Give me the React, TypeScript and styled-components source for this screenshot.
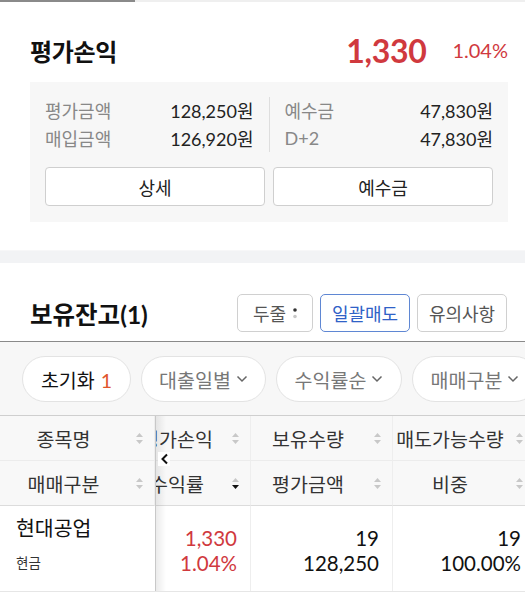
import * as React from 'react';
import styled, { createGlobalStyle } from 'styled-components';

const GlobalStyle = createGlobalStyle`
	html, body {
		margin: 0;
		padding: 0;
		background: #fff;
	}
	body {
		font-family: Lato, 'Noto Sans CJK KR', sans-serif;
		color: #111;
		width: 525px;
		overflow: hidden;
	}
	* {
		box-sizing: border-box;
	}
`;

const RED = '#d0393e';

let TabLine = styled.div`
	display: flex;
	height: 2px;
	background: #efefef;
`;
let TabActive = styled.div`
	width: 135px;
	background: #8a8a8a;
`;

let Summary = styled.section`
	padding: 30px 17px 28px 30px;
`;
let SummaryHead = styled.div`
	display: flex;
	align-items: center;
	height: 36px;
`;
let SectionTitle = styled.h2`
	margin: 0;
	flex: 1;
	font-size: 24px;
	font-weight: 700;
	letter-spacing: -0.3px;
	color: #111;
`;
let BigAmount = styled.span`
	font-size: 32px;
	font-weight: 700;
	color: ${RED};
	margin-right: 26px;
	letter-spacing: -0.3px;
`;
let BigRate = styled.span`
	font-size: 20px;
	color: ${RED};
`;

let InfoBox = styled.div`
	margin-top: 14px;
	background: #f7f7f7;
	padding: 14px 15px 16px;
`;
let InfoGrid = styled.div`
	display: grid;
	grid-template-columns: 1fr 1px 1fr;
	column-gap: 15px;
`;
let InfoCol = styled.div`
	display: flex;
	flex-direction: column;
`;
let Divider = styled.div`
	background: #dedede;
	margin: 1px 0 0;
`;
let InfoRow = styled.div`
	display: flex;
	justify-content: space-between;
	align-items: center;
	height: 28px;
	font-size: 18px;
`;
let InfoLabel = styled.span`
	color: #888;
`;
let InfoValue = styled.span`
	color: #222;
`;
let BoxButtons = styled.div`
	display: grid;
	grid-template-columns: 1fr 1fr;
	gap: 8px;
	margin-top: 15px;
`;
let BoxButton = styled.button`
	height: 39px;
	background: #fff;
	border: 1px solid #cfcfcf;
	border-radius: 4px;
	font-family: inherit;
	font-size: 18px;
	color: #222;
	padding: 0;
`;

let Band = styled.div`
	height: 13px;
	border-top: 1px solid #f7f7f8;
	background: #f2f3f5;
`;

let HoldingHead = styled.div`
	display: flex;
	align-items: center;
	padding: 31px 18px 9px 30px;
	border-bottom: 1px solid #8a8a8a;
`;
let HoldingTitle = styled(SectionTitle)`
	font-size: 24.5px;
	letter-spacing: 0;
`;
let ActionGroup = styled.div`
	display: flex;
	gap: 7px;
`;
let ActionButton = styled.button<{ $primary?: boolean; $w: number }>`
	height: 38px;
	width: ${(p) => p.$w}px;
	background: #fff;
	border: 1px solid ${(p) => (p.$primary ? '#5f87d3' : '#d0d0d0')};
	border-radius: 5px;
	font-family: inherit;
	font-size: 18px;
	color: ${(p) => (p.$primary ? '#2f62c7' : '#555')};
	display: flex;
	align-items: center;
	justify-content: center;
	gap: 7px;
	padding: 0;
`;

let FilterBar = styled.div`
	display: flex;
	gap: 10px;
	padding: 14px 0 13px 22px;
	background: #f7f7f7;
	overflow: hidden;
	white-space: nowrap;
`;
let Pill = styled.button<{ $w: number }>`
	flex: none;
	width: ${(p) => p.$w}px;
	height: 46px;
	border-radius: 23px;
	border: 1px solid #e3e3e3;
	background: #fff;
	font-family: inherit;
	font-size: 19.5px;
	color: #777;
	display: flex;
	align-items: center;
	justify-content: center;
	gap: 5px;
	padding: 0;
`;
let PillStrong = styled.span`
	color: #111;
`;
let PillCount = styled.span`
	color: #e0552b;
	margin-left: 6px;
`;

let Table = styled.div`
	position: relative;
	display: flex;
	border-top: 1px solid #cfcfcf;
	border-bottom: 1px solid #e6e6e6;
`;
let FixedCol = styled.div`
	flex: none;
	width: 156px;
	border-right: 1px solid #c8c8c8;
	position: relative;
	z-index: 2;
	background: #fff;
`;
let Shadow = styled.div`
	position: absolute;
	top: 0;
	bottom: 0;
	left: 156px;
	width: 10px;
	background: linear-gradient(to right, rgba(0, 0, 0, 0.08), rgba(0, 0, 0, 0));
	z-index: 3;
	pointer-events: none;
`;
let ScrollArea = styled.div`
	flex: 1;
	overflow-x: auto;
	scrollbar-width: none;
	&::-webkit-scrollbar {
		display: none;
	}
`;
let ScrollInner = styled.div`
	display: grid;
	grid-template-columns: 120px repeat(3, 142px);
	width: max-content;
`;
let HeadCell = styled.div<{ $last?: boolean }>`
	height: 45px;
	background: #f8f8f8;
	border-bottom: 1px solid ${(p) => (p.$last ? '#dcdcdc' : '#ececec')};
	border-right: 1px solid #eeeeee;
	display: flex;
	align-items: center;
	gap: 8px;
	padding: 0 10px 0 0;
	font-size: 19.5px;
	color: #333;
	white-space: nowrap;
`;
let HeadText = styled.span`
	flex: 1;
	text-align: center;
	overflow: hidden;
`;
let StockCell = styled.div`
	height: 85px;
	padding: 8px 0 0 16px;
	display: flex;
	flex-direction: column;
`;
let StockName = styled.span`
	font-size: 20.5px;
	color: #111;
	line-height: 28px;
`;
let StockType = styled.span`
	font-size: 13.5px;
	color: #333;
	margin-top: 10px;
`;
let ValueCell = styled.div<{ $red?: boolean }>`
	height: 85px;
	border-right: 1px solid #eeeeee;
	display: flex;
	flex-direction: column;
	align-items: flex-end;
	justify-content: center;
	padding: 4px 13px 0 0;
	font-size: 20.5px;
	line-height: 25px;
	color: ${(p) => (p.$red ? RED : '#111')};
`;
let ArrowTag = styled.div`
	position: absolute;
	left: 158px;
	top: 36px;
	z-index: 4;
	width: 12px;
	height: 14px;
	display: flex;
	align-items: center;
	justify-content: center;
	background: #fff;
`;

const SortIcon = ({ active }: { active?: boolean }) => (
	<svg width='9' height='13' viewBox='0 0 9 13'>
		<path d='M4.5 1 L8 5 L1 5 Z' fill='#c8c8c8' />
		<path d='M1 8 L8 8 L4.5 12 Z' fill={active ? '#111' : '#c8c8c8'} />
	</svg>
);

const Chevron = () => (
	<svg width='12' height='8' viewBox='0 0 12 8'>
		<polyline points='1.5,1.5 6,6 10.5,1.5' fill='none' stroke='#666' strokeWidth='1.5' />
	</svg>
);

const Dots = () => (
	<svg width='4' height='14' viewBox='0 0 4 14'>
		<circle cx='2' cy='4' r='1.8' fill='#333' />
		<circle cx='2' cy='10.5' r='1.8' fill='#c8c8c8' />
	</svg>
);

const columns = [
	{ top: '평가손익', bottom: '수익률', activeBottom: true },
	{ top: '보유수량', bottom: '평가금액' },
	{ top: '매도가능수량', bottom: '비중' },
	{ top: '매입단가', bottom: '매입금액' },
];

const rowValues = [
	{ a: '1,330', b: '1.04%', red: true },
	{ a: '19', b: '128,250' },
	{ a: '19', b: '100.00%' },
	{ a: '6,680', b: '126,920' },
];

const App = () => {
	let scrollRef = React.useRef<HTMLDivElement>(null);
	React.useEffect(() => {
		if (scrollRef.current) scrollRef.current.scrollLeft = 25;
	}, []);

	return (
		<>
			<GlobalStyle />
			<TabLine>
				<TabActive />
			</TabLine>

			<Summary>
				<SummaryHead>
					<SectionTitle>평가손익</SectionTitle>
					<BigAmount>1,330</BigAmount>
					<BigRate>1.04%</BigRate>
				</SummaryHead>
				<InfoBox>
					<InfoGrid>
						<InfoCol>
							<InfoRow>
								<InfoLabel>평가금액</InfoLabel>
								<InfoValue>128,250원</InfoValue>
							</InfoRow>
							<InfoRow>
								<InfoLabel>매입금액</InfoLabel>
								<InfoValue>126,920원</InfoValue>
							</InfoRow>
						</InfoCol>
						<Divider />
						<InfoCol>
							<InfoRow>
								<InfoLabel>예수금</InfoLabel>
								<InfoValue>47,830원</InfoValue>
							</InfoRow>
							<InfoRow>
								<InfoLabel>D+2</InfoLabel>
								<InfoValue>47,830원</InfoValue>
							</InfoRow>
						</InfoCol>
					</InfoGrid>
					<BoxButtons>
						<BoxButton>상세</BoxButton>
						<BoxButton>예수금</BoxButton>
					</BoxButtons>
				</InfoBox>
			</Summary>

			<Band />

			<HoldingHead>
				<HoldingTitle>보유잔고(1)</HoldingTitle>
				<ActionGroup>
					<ActionButton $w={76}>
						두줄 <Dots />
					</ActionButton>
					<ActionButton $w={90} $primary>
						일괄매도
					</ActionButton>
					<ActionButton $w={90}>유의사항</ActionButton>
				</ActionGroup>
			</HoldingHead>

			<FilterBar>
				<Pill $w={109}>
					<PillStrong>
						초기화<PillCount>1</PillCount>
					</PillStrong>
				</Pill>
				<Pill $w={125}>
					대출일별 <Chevron />
				</Pill>
				<Pill $w={126}>
					수익률순 <Chevron />
				</Pill>
				<Pill $w={126}>
					매매구분 <Chevron />
				</Pill>
			</FilterBar>

			<Table>
				<FixedCol>
					<HeadCell>
						<HeadText>종목명</HeadText>
						<SortIcon />
					</HeadCell>
					<HeadCell $last>
						<HeadText>매매구분</HeadText>
						<SortIcon />
					</HeadCell>
					<StockCell>
						<StockName>현대공업</StockName>
						<StockType>현금</StockType>
					</StockCell>
				</FixedCol>
				<Shadow />
				<ArrowTag>
					<svg width='9' height='12' viewBox='0 0 9 12'>
						<polyline points='7,1.5 2.5,6 7,10.5' fill='none' stroke='#111' strokeWidth='2' />
					</svg>
				</ArrowTag>
				<ScrollArea ref={scrollRef}>
					<ScrollInner>
						{columns.map((c) => (
							<HeadCell key={c.top}>
								<HeadText>{c.top}</HeadText>
								<SortIcon />
							</HeadCell>
						))}
						{columns.map((c) => (
							<HeadCell key={c.bottom} $last>
								<HeadText>{c.bottom}</HeadText>
								<SortIcon active={c.activeBottom} />
							</HeadCell>
						))}
						{rowValues.map((v, i) => (
							<ValueCell key={i} $red={v.red}>
								<span>{v.a}</span>
								<span>{v.b}</span>
							</ValueCell>
						))}
					</ScrollInner>
				</ScrollArea>
			</Table>
		</>
	);
};

export default App;
